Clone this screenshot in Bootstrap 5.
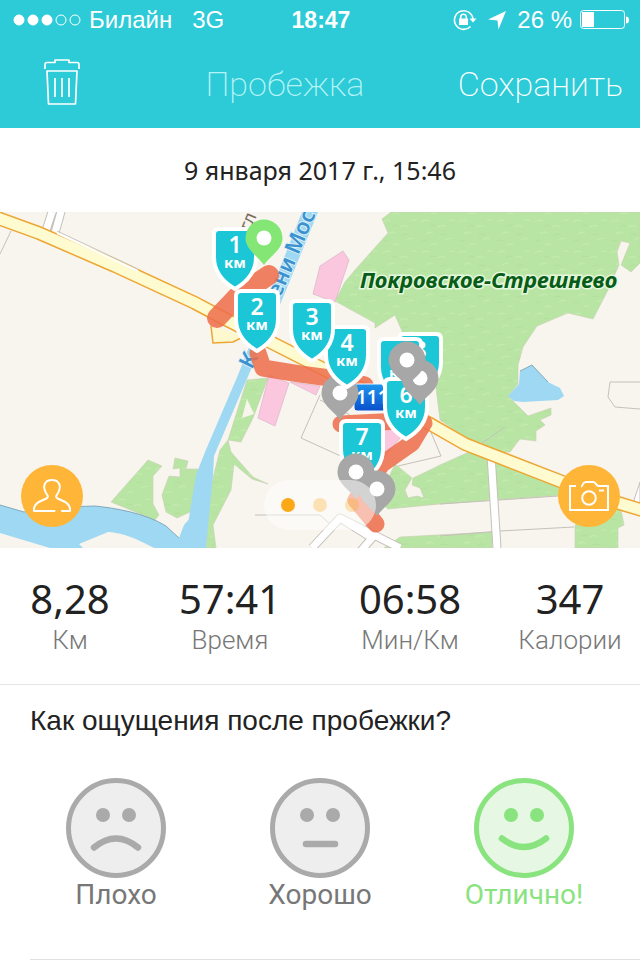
<!DOCTYPE html>
<html lang="ru">
<head>
<meta charset="utf-8">
<meta name="viewport" content="width=device-width, initial-scale=1">
<title>Пробежка</title>
<link href="https://cdn.jsdelivr.net/npm/bootstrap@5.3.0/dist/css/bootstrap.min.css" rel="stylesheet">
<style>
body { font-family: "Liberation Sans", Arial, sans-serif; color: #222; background: #fff; }
.app-header { background: #2dcad7; color: #fff; }
.status-bar { display: grid; grid-template-columns: 1fr auto 1fr; height: 40px; padding: 0 11px 0 13px; font-size: 24px; line-height: 40px; }
.status-time { font-size: 23px; }
.status-net { margin-left: 20px; }
.app-nav { height: 88px; font-family: Roboto, sans-serif; }
.trash-btn { padding: 0 32px 4px 44px; }
.nav-title { font-size: 34px; font-weight: 200; line-height: 40px; color: #b4f3f6; }
.save-btn { padding: 0 17px 0 0; font-size: 34px; line-height: 40px; font-weight: 200; }
.run-date { height: 84px; font-family: "Noto Sans", sans-serif; font-size: 25px; line-height: 32px; }
.map-svg { width: 100%; height: auto; font-family: "Noto Sans", sans-serif; }
.round-btn { width: 62px; height: 62px; bottom: 21px; }
.round-btn, .round-btn:hover { background: #ffb638; }
.round-btn.at-start { left: 21px; }
.round-btn.at-end { right: 20px; }
.pager { bottom: 18px; left: 50%; transform: translateX(-50%); width: 112px; height: 50px; background: rgba(255,255,255,.5); gap: 18px; }
.pager .pager-dot { width: 14px; height: 14px; background: #fba919; opacity: .3; }
.pager .pager-dot[aria-current] { opacity: 1; }
.stats { display: grid; grid-template-columns: 7fr 9fr 9fr 7fr; padding: 24px 0 30px; border-bottom: 1px solid #e6e6e6; }
.stat-value { font-family: "Noto Sans", sans-serif; font-size: 40px; line-height: 54px; }
.stat-name { font-family: Roboto, sans-serif; font-weight: 300; font-size: 26px; line-height: 28px; color: #777; }
.question { font-size: 28px; line-height: 32px; padding: 20px 30px 0; }
.moods { padding: 41px 14px 0; }
.mood { color: #aaa; cursor: pointer; --face: #eee; }
.mood span { font-family: Roboto, sans-serif; font-size: 28px; line-height: 34px; color: #777; }
.mood:has(:checked) { color: #89e37e; --face: #e6f8e3; }
.mood:has(:checked) span { color: #89e37e; }
.divider { margin: 47px 0 0 30px; border-top: 1px solid #e0e0e0; }
</style>
</head>
<body>
<header class="app-header">
  <div class="status-bar">
    <div class="d-flex align-items-center">
      <svg width="68" height="12" viewBox="0 0 68 12" fill="#fff" stroke="#fff" aria-hidden="true"><circle cx="6" cy="6" r="5"/><circle cx="20" cy="6" r="5"/><circle cx="34" cy="6" r="5"/><circle cx="48" cy="6" r="5" fill="none"/><circle cx="62" cy="6" r="5" fill="none"/></svg>
      <span class="ms-2">Билайн</span><span class="status-net">3G</span>
    </div>
    <b class="status-time">18:47</b>
    <div class="d-flex align-items-center justify-content-end">
      <svg width="24" height="22" viewBox="0 0 24 22" fill="none" stroke="#fff" stroke-width="1.6" aria-hidden="true"><path d="M20 10A9.3 9.3 0 1 0 17.500 17.500"/><path d="M16.500 9.500h7l-3.500 4z" fill="#fff" stroke="none"/><rect x="6" y="9.500" width="9" height="6.500" fill="#fff" stroke="none"/><path d="M7.700 10V8a2.800 2.800 0 0 1 5.600 0v2"/></svg>
      <svg class="ms-2" width="24" height="20" viewBox="0 0 24 20" fill="#fff" aria-hidden="true"><path d="M21 1 13.500 19.500 12.500 10.500 3 9.500z"/></svg>
      <span class="ms-2">26 %</span>
      <svg class="ms-2" width="49" height="20" viewBox="0 0 49 20" aria-hidden="true"><rect x=".5" y=".5" width="44" height="18" rx="3" fill="none" stroke="#fff"/><rect x="2" y="2" width="12" height="15" fill="#fff"/><path d="M46 6.500q3 0 3 3.500t-3 3.500z" fill="#fff"/></svg>
    </div>
  </div>
  <nav class="app-nav d-flex align-items-center">
    <button class="btn border-0 trash-btn" type="button" aria-label="Удалить">
      <svg class="d-block" width="36" height="46" viewBox="0 0 36 46" fill="none" stroke="#fff" stroke-width="1.700" stroke-linejoin="round" aria-hidden="true"><path d="M1 10V5.500Q1 3.500 3 3.500H11V1H25V3.500H33Q35 3.500 35 5.500V10M3 12H33L31.500 45H4.500zM11 19V38M18 19V38M25 19V38"/></svg>
    </button>
    <h1 class="nav-title flex-fill text-center m-0">Пробежка</h1>
    <button class="btn border-0 text-white save-btn" type="button">Сохранить</button>
  </nav>
</header>
<main>
  <div class="run-date d-flex align-items-center justify-content-center">9 января 2017 г., 15:46</div>
  <section class="position-relative">
    <svg class="map-svg d-block" viewBox="0 212 640 336" role="img" aria-label="Карта маршрута">
      <defs>
        <pattern id="grass" width="38" height="31" patternUnits="userSpaceOnUse"><rect width="38" height="31" fill="#b9e5a4"/><path d="M3 5q4-3 8-1M20 10q5-3 8 0M8 17q3-3 7-1M27 23q4-3 7-1M13 28q4-2 6 0M31 4q3-2 5 0" stroke="#c1eaac" stroke-width="1.500" fill="none"/><path d="M12 9q4-2 6 0M22 18q4-2 7 0M3 24q3-2 6 0" stroke="#b2df9c" fill="none"/></pattern>
        <linearGradient id="blue" x1="0" y1="0" x2="0" y2="1"><stop offset="0" stop-color="#1e96ee"/><stop offset="1" stop-color="#0a50cc"/></linearGradient>
        <path id="shield" d="M-16 2H16Q21 2 21 7V30C21 45 12 55 0 62C-12 55-21 45-21 30V7Q-21 2-16 2Z" fill="#1bc6d6" stroke="#fff" stroke-width="4"/>
        <g id="pin"><path d="M0 27C-5 19-18.500 12-18.500 0A18.500 18.500 0 0 1 18.500 0C18.500 12 5 19 0 27Z"/><circle r="7.500" fill="#fff"/></g>
      </defs>
      <rect y="212" width="640" height="336" fill="#f8f5ee"/>
      <!-- parks -->
      <g fill="url(#grass)" stroke="#c9ccb5" stroke-width=".6">
        <path d="M391 212 382 219 388 233 355 270 345 282 335 301 375 323 375 328 395 315 405 338 435 380 440 420 470 441 495 452 510 452 520 439 536 441 536 431 545 425 540 420 551 415 551 408 528 416 508 396 518 384 518 365 523 347 537 326 568 313 593 319 608 290 619 265 617 252 621 241 630 243 621 265 631 272 640 263V212Z"/>
        <path d="M440 465 480 447 555 475 565 495 440 504 388 509 378 500 395 464 412 478 405 490 408 498 417 496 424 498 420 488 412 485 413 478 430 470Z"/>
        <path d="M384 548 400 537 492 532V548ZM575 525 620 505 624 525 618 528V548H575Z"/>
        <path d="M111 502 148 460 162 466 153 476V504L159 515 155 520ZM175 458 188 461 186 469H198L190 512 177 518 166 512 162 495 169 476 180 477V468L173 469Z"/>
        <path d="M247 380 268 378 253 418 241 442 228 440ZM228 440 231 452 253 477 268 484 252 479 234 464 231 490 213 525 216 548H206L210 490 220 450Z"/>
      </g>
      <path d="M247 399 254 414 242 418Z" fill="#f8f5ee"/>
      <!-- blocks -->
      <g fill="#fbc7df" stroke="#d9b3c8" stroke-width=".7"><path d="M343 251 349 260 335 302 313 294 320 266Z"/><path d="M269 375 289 383 275 426 258 418Z"/><path d="M290 382 320 386 316 395ZM382 423 405 432 382 460Z"/></g>
      <!-- water -->
      <g fill="#9fd8f2"><path d="M302 212H318L282 300 255 360 214 456 213 475 206 548H184L196 475 205 452 238 375Z"/><path d="M0 505 24 512C45 506 70 507 95 506C115 508 145 513 166 526L179 538 184 525 206 500V548H83L79 544 108 532C130 533 150 547 155 548H50L0 533Z"/><path d="M508 396 519 384 520 371 532 365 548 382 560 388 564 396 558 400 523 402 514 401Z"/></g>
      <path d="M0 505 24 512C45 506 70 507 95 506C115 508 145 513 166 526L179 538M520 371 532 365 548 382" fill="none" stroke="#719aab" stroke-width=".8"/>
      <path d="M79 544 108 532C130 533 150 547 155 548H83Z" fill="#f8f5ee"/>
      <!-- lanes -->
      <g fill="none" stroke="#c5c1ba" stroke-width="1"><path d="M11 231 0 254M320 395 301 438 345 458M320 400 350 415M398 466 441 456 430 430M255 515H320L331 525M440 536 500 531 574 527M440 504 558 496M640 382H610L608 397 615 407 640 409M475 448 505 427"/></g>
      <g fill="none" stroke="#c5c1ba" stroke-width="9" stroke-linejoin="round"><path d="M491 455 497 548"/><path d="M43 240 52 212M53 240 62 208M312 548 340 518 400 548M340 518 372 538 360 552"/></g>
      <g fill="none" stroke="#fff" stroke-width="7" stroke-linejoin="round"><path d="M491 455 497 548"/><path d="M43 240 52 212M53 240 62 208M312 548 340 518 400 548M340 518 372 538 360 552"/></g>
      <path d="M640 482 634 500 640 512Z" fill="#fff" stroke="#c5c1ba"/>
      <!-- highway -->
      <g fill="none"><path d="M-5 217 39 233 115 266 195 303 225 319 290 352 345 380 430 424 465 444 493 455 560 481 615 502 645 511" stroke="#eda634" stroke-width="14"/>
      <path d="M-5 217 39 233 115 266 195 303 225 319 290 352 345 380 430 424 465 444 493 455 560 481 615 502 645 511" stroke="#fdfbcf" stroke-width="11"/></g>
      <path d="M211 326 213 343 233 342 245 336" fill="#fdf8cd" stroke="#eda634" stroke-width="1.500"/>
      <path d="M57 231 138 269" stroke="#c9c4b8"/><path d="M57 233 138 271" stroke="#fff" stroke-width="2"/>
      <g fill="#3c91cf" stroke="#d7f0fa" stroke-width="2" paint-order="stroke" font-size="22" font-weight="600"><text transform="translate(252 370) rotate(-64)">К</text><text transform="translate(273 315) rotate(-67)">мени Мос</text></g>
      <text transform="translate(250 232) rotate(-67)" font-size="18" fill="#776a5a">гл</text>
      <text x="360" y="288" font-size="22" font-weight="700" font-style="italic" fill="#075d17" stroke="#e5f7dc" stroke-width="3" paint-order="stroke">Покровское-Стрешнево</text>
      <!-- run track -->
      <g fill="none" stroke="#ed6e4b" stroke-opacity=".86" stroke-linecap="round" stroke-linejoin="round"><path d="M217 318 238 296 269 275" stroke-width="20"/><path d="M258 353 263 368 300 374 345 380 365 385" stroke-width="17"/><path d="M341 424 400 421 424 423 412 443 382 464 356 500 376 524" stroke-width="17"/></g>
      <rect x="354" y="384" width="40" height="27" rx="3" fill="url(#blue)" stroke="#f5f8ff"/>
      <text x="356" y="404" font-size="19" font-weight="600" fill="#fff">111</text>
      <!-- kilometre markers -->
      <g fill="#fff" text-anchor="middle" font-weight="600">
        <g transform="translate(235 227)"><use href="#shield"/><text y="26" font-size="23">1</text><text y="41" font-size="15" font-weight="700">км</text></g>
        <g transform="translate(257 289)"><use href="#shield"/><text y="26" font-size="23">2</text><text y="41" font-size="15" font-weight="700">км</text></g>
        <use href="#pin" x="340" y="393" fill="#a7a7a7"/>
        <g transform="translate(347 325)"><use href="#shield"/><text y="26" font-size="23">4</text><text y="41" font-size="15" font-weight="700">км</text></g>
        <g transform="translate(312 299)"><use href="#shield"/><text y="26" font-size="23">3</text><text y="41" font-size="15" font-weight="700">км</text></g>
        <g transform="translate(420 332)"><use href="#shield"/><text y="26" font-size="23">8</text></g>
        <g transform="translate(400 337)"><use href="#shield"/><text y="41" font-size="15" font-weight="700">км</text></g>
        <g transform="translate(406 377)"><use href="#shield"/><text y="26" font-size="23">6</text><text y="41" font-size="15" font-weight="700">км</text></g>
        <g transform="translate(362 419)"><use href="#shield"/><text y="26" font-size="23">7</text><text y="41" font-size="15" font-weight="700">км</text></g>
      </g>
      <use href="#pin" x="264" y="238" fill="#84e674"/>
      <g fill="#a7a7a7"><use href="#pin" x="420" y="378"/><use href="#pin" x="407" y="360"/><use href="#pin" x="377" y="489"/><use href="#pin" x="356" y="472"/></g>
    </svg>
    <button class="btn border-0 rounded-circle p-0 position-absolute d-flex align-items-center justify-content-center round-btn at-start" type="button" aria-label="Друзья">
      <svg width="40" height="34" viewBox="0 0 40 34" fill="none" stroke="#fff" stroke-width="2" stroke-linecap="round" stroke-linejoin="round" aria-hidden="true"><path d="M22.500 32H2C1 24 9 22 14.500 19.500C17 18 15.500 16 14 14C10 7 13 1 20 1S30 7 26 14C24.500 16 23 18 25.500 19.500C31 22 39 24 38 32H30"/></svg>
    </button>
    <div class="pager position-absolute rounded-pill d-flex align-items-center justify-content-center">
      <button class="btn border-0 rounded-circle p-0 pager-dot" type="button" aria-label="Карта" aria-current="true"></button><button class="btn border-0 rounded-circle p-0 pager-dot" type="button" aria-label="График"></button><button class="btn border-0 rounded-circle p-0 pager-dot" type="button" aria-label="Круги"></button>
    </div>
    <button class="btn border-0 rounded-circle p-0 position-absolute d-flex align-items-center justify-content-center round-btn at-end" type="button" aria-label="Добавить фото">
      <svg width="40" height="30" viewBox="0 0 40 30" fill="none" stroke="#fff" stroke-width="2" aria-hidden="true"><path d="M7 5H1V29H39V5H30Q28 5 27 3Q26 1 24 1H17Q15 1 14 3Q13 5.500 12 5.500"/><circle cx="20" cy="17" r="6.800"/><path d="M30 9.500H35"/></svg>
    </button>
  </section>
  <section class="stats text-center">
    <div><div class="stat-value">8,28</div><div class="stat-name">Км</div></div>
    <div><div class="stat-value">57:41</div><div class="stat-name">Время</div></div>
    <div><div class="stat-value">06:58</div><div class="stat-name">Мин/Км</div></div>
    <div><div class="stat-value">347</div><div class="stat-name">Калории</div></div>
  </section>
  <fieldset>
    <legend class="question m-0">Как ощущения после пробежки?</legend>
    <div class="moods row g-0 text-center">
      <label class="mood col d-flex flex-column align-items-center"><input class="visually-hidden" type="radio" name="mood">
        <svg width="100" height="100" viewBox="0 0 100 100" aria-hidden="true"><circle cx="50" cy="50" r="47.500" fill="var(--face)" stroke="currentColor" stroke-width="5"/><g fill="currentColor"><circle cx="37" cy="37" r="7"/><circle cx="63" cy="37" r="7"/></g><path d="M28 69.500Q50 51.500 72 69.500" fill="none" stroke="currentColor" stroke-width="6.500" stroke-linecap="round"/></svg><span>Плохо</span></label>
      <label class="mood col d-flex flex-column align-items-center"><input class="visually-hidden" type="radio" name="mood">
        <svg width="100" height="100" viewBox="0 0 100 100" aria-hidden="true"><circle cx="50" cy="50" r="47.500" fill="var(--face)" stroke="currentColor" stroke-width="5"/><g fill="currentColor"><circle cx="37" cy="37" r="7"/><circle cx="63" cy="37" r="7"/></g><path d="M36 66H65" fill="none" stroke="currentColor" stroke-width="6.500" stroke-linecap="round"/></svg><span>Хорошо</span></label>
      <label class="mood col d-flex flex-column align-items-center"><input class="visually-hidden" type="radio" name="mood" checked>
        <svg width="100" height="100" viewBox="0 0 100 100" aria-hidden="true"><circle cx="50" cy="50" r="47.500" fill="var(--face)" stroke="currentColor" stroke-width="5"/><g fill="currentColor"><circle cx="37" cy="37" r="7"/><circle cx="63" cy="37" r="7"/></g><path d="M28 60.500Q50 77.500 72 60.500" fill="none" stroke="currentColor" stroke-width="6.500" stroke-linecap="round"/></svg><span>Отлично!</span></label>
    </div>
  </fieldset>
  <div class="divider"></div>
</main>
<script src="https://cdn.jsdelivr.net/npm/bootstrap@5.3.0/dist/js/bootstrap.bundle.min.js"></script>
</body>
</html>
